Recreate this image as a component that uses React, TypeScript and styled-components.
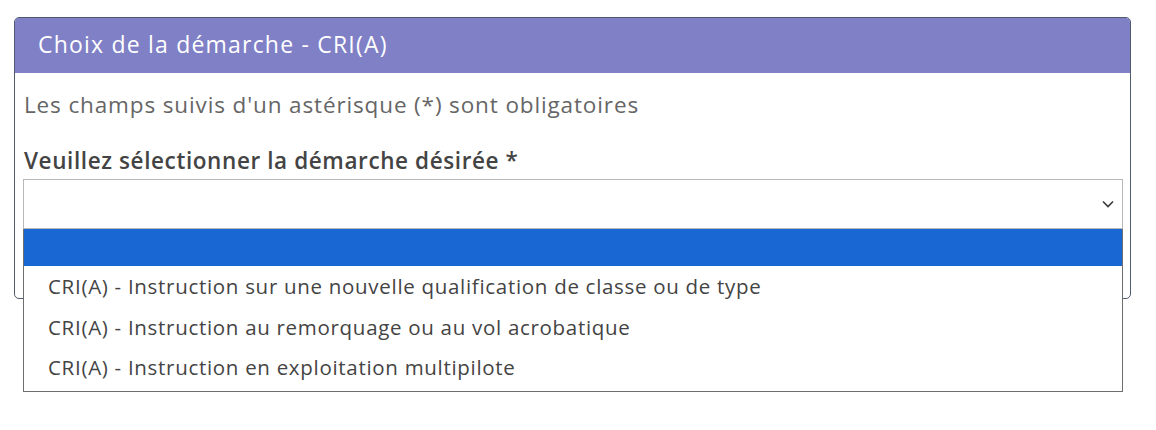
import React from 'react'
import styled, { createGlobalStyle } from 'styled-components'

const GlobalStyle = createGlobalStyle`
  body {
    margin: 0;
    background: #ffffff;
    font-family: "Open Sans", Lato, sans-serif;
  }
`

const options = [
    "CRI(A) - Instruction sur une nouvelle qualification de classe ou de type",
    "CRI(A) - Instruction au remorquage ou au vol acrobatique",
    "CRI(A) - Instruction en exploitation multipilote",
]

const Chevron = () => (
    <svg width="12" height="8" viewBox="0 0 12 8" fill="none">
        <path d="M1 1.5 L6 6.5 L11 1.5" stroke="#3a3a3a" strokeWidth="1.6" />
    </svg>
)

const App = () => {
    return (
        <>
            <GlobalStyle />
            <Page>
                <Card>
                    <CardHeader>Choix de la démarche - CRI(A)</CardHeader>
                    <CardBody>
                        <Hint>Les champs suivis d'un astérisque (*) sont obligatoires</Hint>
                        <Label>Veuillez sélectionner la démarche désirée *</Label>
                        <SelectWrap>
                            <SelectBox>
                                <Chevron />
                            </SelectBox>
                            <OptionList>
                                <Option $selected />
                                {options.map((o) => (
                                    <Option key={o}>{o}</Option>
                                ))}
                            </OptionList>
                        </SelectWrap>
                    </CardBody>
                </Card>
            </Page>
        </>
    )
}
export default App

const Page = styled.div`
padding: 17px 14px;
min-height: 100vh;
box-sizing: border-box;
`

const Card = styled.div`
width: 1117px;
box-sizing: border-box;
border: 1px solid #4f5b6b;
border-radius: 5px;
`

const CardHeader = styled.div`
height: 55px;
display: flex;
align-items: center;
padding: 0 23px;
padding-bottom: 3px;
box-sizing: border-box;
background: #7f80c6;
color: #ffffff;
font-size: 23px;
letter-spacing: 1.2px;
border-radius: 4px 4px 0 0;
`

const CardBody = styled.div`
padding: 17px 7px 69px 8px;
`

const Hint = styled.div`
color: #666666;
font-size: 22.5px;
line-height: 30px;
letter-spacing: 0.87px;
padding-left: 1px;
`

const Label = styled.div`
margin-top: 26px;
color: #444444;
font-size: 22.5px;
font-weight: 600;
line-height: 30px;
letter-spacing: 0.6px;
padding-left: 1px;
`

const SelectWrap = styled.div`
position: relative;
margin-top: 3px;
`

const SelectBox = styled.div`
height: 50px;
box-sizing: border-box;
border: 1px solid #b8b8b8;
display: flex;
align-items: center;
justify-content: flex-end;
padding-right: 8px;
`

const OptionList = styled.div`
position: absolute;
top: 50px;
left: 0;
right: 0;
background: #ffffff;
border: 1px solid #6e6e6e;
border-top: none;
padding-bottom: 3px;
`

const Option = styled.div<{ $selected?: boolean }>`
height: ${(p) => (p.$selected ? '37px' : '40.5px')};
display: flex;
align-items: center;
padding-left: 24px;
background: ${(p) => (p.$selected ? '#1967d2' : '#ffffff')};
color: #444444;
font-size: 20.5px;
letter-spacing: 0.7px;
`
